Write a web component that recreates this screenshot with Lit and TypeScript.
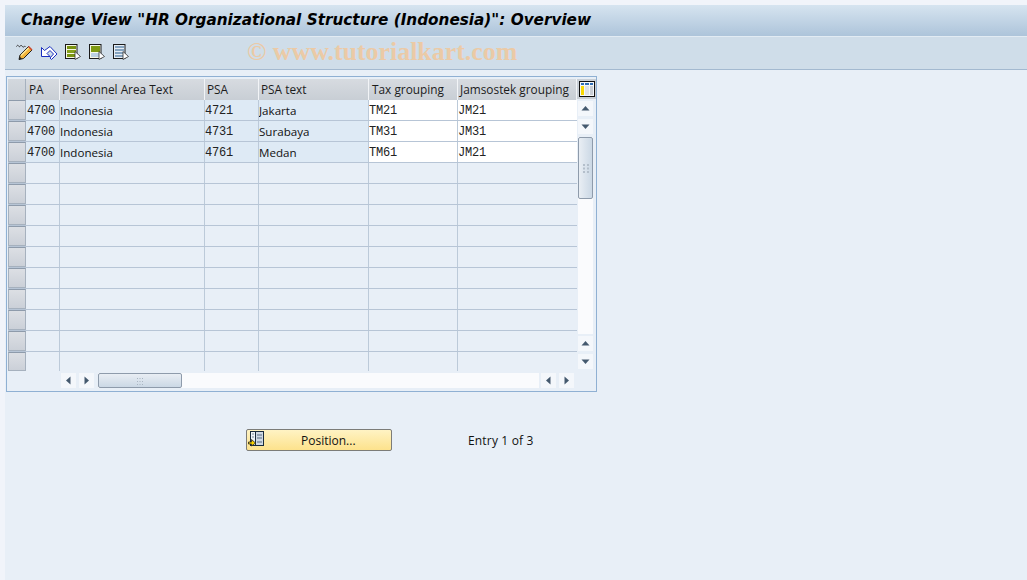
import { LitElement, html, css, svg } from "lit";
import { customElement } from "lit/decorators.js";

const rows = [
  ["4700", "Indonesia", "4721", "Jakarta", "TM21", "JM21"],
  ["4700", "Indonesia", "4731", "Surabaya", "TM31", "JM31"],
  ["4700", "Indonesia", "4761", "Medan", "TM61", "JM21"],
  ...Array.from({ length: 10 }, () => ["", "", "", "", "", ""]),
];
const heads = ["PA", "Personnel Area Text", "PSA", "PSA text", "Tax grouping", "Jamsostek grouping"];
const widths = ["w1", "w2", "w3", "w4", "w5", "w6"];
const mono = [true, false, true, false, true, true];

const pencil = svg`<svg width="18" height="18" viewBox="0 0 18 18"><path d="M0.500 3.500c1-2 2-1 2.500 0s1.500-1.500 2.500-1 1 2 2 1.500 1-1 2-.5" fill="none" stroke="#333" stroke-width="1"/><path d="M3 16.500l1-4.500 8.500-8.500 3.500 3.500-8.500 8.500z" fill="#f3b53a" stroke="#1c1c1c" stroke-width="1"/><path d="M5 12.500l8-8" stroke="#fde79a" stroke-width="1.500"/><path d="M12.500 3.500l3.500 3.500" stroke="#c9442c" stroke-width="1.500"/><path d="M3 16.500l.7-3 2.300 2.300z" fill="#222"/></svg>`;
const undo = svg`<svg width="18" height="18" viewBox="0 0 18 18"><path d="M1.500 4.500V13.500H10L7 10.500L10 7.500L13.500 11L10 15L11.500 16.500L17 11L10 3.500L4.500 7.500Z" fill="#fff" stroke="#1a2fc0" stroke-width="1"/></svg>`;
const doc = (kind: string) => svg`<svg width="16" height="16" viewBox="0 0 16 16">
  <rect x="0.500" y="0.500" width="11.500" height="14" fill="${kind === "c" ? "#e6edf4" : "#f6f8e6"}" stroke="#1a1a1a"/>
  ${kind === "a" ? svg`<rect x="2" y="2" width="9" height="3" fill="#7a9412"/><rect x="2" y="6" width="9" height="3" fill="#86a01a"/><rect x="2" y="10" width="9" height="3" fill="#7a9412"/>` : ""}
  ${kind === "b" ? svg`<rect x="2" y="2" width="9" height="6" fill="#7f9a12"/><rect x="2" y="9" width="9" height="4" fill="#bcd0e2"/>` : ""}
  ${kind === "c" ? svg`<rect x="2" y="2" width="9" height="2" fill="#86a4c0"/><rect x="2" y="5" width="9" height="2" fill="#86a4c0"/><rect x="2" y="8" width="9" height="2" fill="#86a4c0"/><rect x="2" y="11" width="9" height="2" fill="#86a4c0"/>` : ""}
  <path d="M10 7.500l5.500 5-5.500 3z" fill="#fff" stroke="#333" stroke-width="0.800"/></svg>`;
const cfg = svg`<svg width="16" height="16" viewBox="0 0 16 16"><rect x="0" y="0" width="16" height="16" fill="#111"/><rect x="1" y="1" width="14" height="14" fill="#f4f6f8"/><rect x="2" y="2" width="3" height="2" fill="#2e6db5"/><rect x="6" y="2" width="4" height="2" fill="#2e6db5"/><rect x="11" y="2" width="3" height="2" fill="#2e6db5"/><rect x="2" y="5" width="3" height="9" fill="#f8d800"/><rect x="6" y="5" width="4" height="9" fill="#dde1e6"/><rect x="11" y="5" width="3" height="9" fill="#c9ced5"/></svg>`;
const posIcon = svg`<svg width="16" height="16" viewBox="0 0 16 16"><rect x="2.500" y="0.500" width="13" height="14" fill="#cfd8e4" stroke="#1a2a3a"/><rect x="2.500" y="0.500" width="5" height="14" fill="#eef2f7" stroke="#1a2a3a"/><path d="M9 4h5M9 7h5M9 11h5" stroke="#5a6c80" stroke-width="1.200"/><path d="M4 3h2M4 6h2" stroke="#7a8a9a"/><path d="M0.500 11h3V8.500l4 3.500-4 3V13h-3z" fill="#f7d000" stroke="#222" stroke-width="0.800"/></svg>`;

const tri = (d: string) => {
  const p: Record<string, string> = { up: "M0.500 6.500L4.500 2l4 4.500z", down: "M0.500 2.500h8L4.500 7z", left: "M6.500 0.500v8L2 4.500z", right: "M2.500 0.500v8L7 4.500z" };
  return svg`<svg width="9" height="9" viewBox="0 0 9 9"><path d="${p[d]}" fill="#44596e"/></svg>`;
};
const grip = svg`<svg width="8" height="8" viewBox="0 0 8 8"><path d="M1 1h1v1H1zM3.500 1h1v1h-1zM6 1h1v1H6zM1 4h1v1H1zM3.500 4h1v1h-1zM6 4h1v1H6zM1 7h1v1H1zM3.500 7h1v1h-1zM6 7h1v1H6z" fill="#a9b5c2"/></svg>`;
const gripV = svg`<svg width="8" height="9" viewBox="0 0 8 9"><path d="M1 0h2v2H1zM5 0h2v2H5zM1 3.500h2v2H1zM5 3.500h2v2H5zM1 7h2v2H1zM5 7h2v2H5z" fill="#b4bfcb"/></svg>`;

@customElement("app-root")
export class AppRoot extends LitElement {
  static styles = css`
    :host { display: block; width: 1027px; height: 580px; background: #f1f4fa; overflow: hidden; font-family: "Open Sans", "Noto Sans", sans-serif; color: #111; }
    .page { position: relative; margin: 5px 0 0 5px; height: 575px; background: #e8eff7; }
    .title { height: 31px; box-sizing: border-box; padding: 0 0 2px 16px; background: linear-gradient(#d6e4f0, #adc4da); display: flex; align-items: center; font: italic bold 15.25px "DejaVu Sans", sans-serif; color: #000; white-space: nowrap; }
    .tools { height: 34px; box-sizing: border-box; background: #cfdde9; border-bottom: 1px solid #a3b9d0; border-top: 1px solid #e2ebf3; display: flex; align-items: center; padding: 0 0 3px 11px; gap: 6px; }
    .tools span { display: flex; width: 18px; height: 18px; align-items: center; justify-content: center; }
    .mark { position: absolute; left: 242px; top: 32px; font: bold 25.9px "Liberation Serif", serif; color: #ebcaa6; white-space: nowrap; }
    .table { margin: 6px 0 0 1px; width: 591px; height: 316px; box-sizing: border-box; border: 1px solid #8fb0d3; padding: 2px 0 0 1px; display: grid; grid-template-columns: 569px 1fr; grid-template-rows: 294px 18px; }
    .main { display: flex; flex-direction: column; }
    .row { display: flex; height: 21px; box-sizing: border-box; border-bottom: 1px solid #b7c5d6; flex: none; font-size: 11.6px; }
    .row:last-child { border-bottom: 0; height: 19px; }
    .row.head { border-bottom: 0; font-size: 11.85px; }
    .c { box-sizing: border-box; border-right: 1px solid #bccad9; display: flex; align-items: center; white-space: nowrap; overflow: hidden; }
    .sel { width: 18px; border: 1px solid #a6b1be; border-top-color: #8e9bab; border-bottom-color: #a6b1be; background: linear-gradient(#dcdfe4, #cbd0d8); padding: 0; }
    .w1 { width: 34px; padding-left: 1px; } .w2 { width: 145px; } .w3 { width: 54px; } .w4 { width: 110px; } .w5 { width: 89px; } .w6 { width: 119px; border-right: 0; }
    .head .c { background: linear-gradient(#d7dbe0, #c8ced5); border-right: 1px solid #f2f4f7; padding: 0 0 2px 2px; height: 21px; color: #1c1c1c; }
    .head .w1 { padding-left: 3px; }
    .head .w5 { padding-left: 3px; }
    .head .sel { border: 0; border-right: 1px solid #a6b1be; background: linear-gradient(#d3d8de, #c8ced5); padding: 0; }
    .ro { background: #deeaf5; }
    .wh { background: #fff; }
    .mono { font: 12px "Liberation Mono", monospace; letter-spacing: -0.2px; padding-top: 1px; color: #222; }
    .side { display: flex; flex-direction: column; align-items: flex-start; padding-left: 1px; }
    .cfg { width: 19px; height: 20px; background: #c9cfd6; display: flex; align-items: center; justify-content: center; margin: 0 0 2px -1px; }
    .btn { flex: none; width: 15px; height: 15px; background: #f4f7fb; display: flex; align-items: center; justify-content: center; }
    .vs { display: flex; flex-direction: column; align-items: flex-start; }
    .vs .btn + .btn { margin-top: 3px; }
    .vtrack { width: 15px; height: 197px; margin: 3px 0 2px; background: #fafbfd; flex: none; }
    .vthumb { box-sizing: border-box; width: 15px; height: 62px; border: 1px solid #8e9bab; border-radius: 2px; background: linear-gradient(90deg, #e9eef4, #cbd8e5); display: flex; align-items: center; justify-content: center; }
    .hs { display: flex; align-items: flex-start; padding: 0 0 0 53px; box-sizing: border-box; }
    .hs .btn + .btn { margin-left: 3px; }
    .htrack { width: 441px; height: 15px; margin: 0 2px 0 4px; background: #fafbfd; }
    .hthumb { box-sizing: border-box; width: 84px; height: 15px; border: 1px solid #8e9bab; border-radius: 2px; background: linear-gradient(#e9eef4, #cbd8e5); display: flex; align-items: center; justify-content: center; }
    .foot { display: flex; align-items: center; margin: 37px 0 0 241px; font-size: 12px; }
    .pos { box-sizing: border-box; width: 146px; height: 22px; border: 1px solid #7c7c78; border-radius: 2px; background: linear-gradient(#fff3c4, #fde28c); display: flex; align-items: center; position: relative; padding-left: 54px; color: #111; }
    .pos svg { position: absolute; left: 1px; top: 1px; }
    .pos b { font-weight: 400; white-space: nowrap; }
    .entry { margin-left: 76px; letter-spacing: 0.17px; }
  `;

  render() {
    return html`<div class="page">
      <div class="title">Change View "HR Organizational Structure (Indonesia)": Overview</div>
      <div class="tools"><span>${pencil}</span><span>${undo}</span><span>${doc("a")}</span><span>${doc("b")}</span><span>${doc("c")}</span></div>
      <div class="mark">© www.tutorialkart.com</div>
      <div class="table">
        <div class="main">
          <div class="row head"><div class="c sel"></div>${heads.map((h, i) => html`<div class="c ${widths[i]}">${h}</div>`)}</div>
          ${rows.map((r) => html`<div class="row"><div class="c sel"></div>${r.map((v, i) => html`<div class="c ${widths[i]} ${v ? (i < 4 ? "ro" : "wh") : ""} ${mono[i] ? "mono" : ""}">${v}</div>`)}</div>`)}
        </div>
        <div class="side">
          <div class="cfg">${cfg}</div>
          <div class="vs">
            <div class="btn">${tri("up")}</div><div class="btn">${tri("down")}</div>
            <div class="vtrack"><div class="vthumb">${gripV}</div></div>
            <div class="btn">${tri("up")}</div><div class="btn">${tri("down")}</div>
          </div>
        </div>
        <div class="hs">
          <div class="btn">${tri("left")}</div><div class="btn">${tri("right")}</div>
          <div class="htrack"><div class="hthumb">${grip}</div></div>
          <div class="btn">${tri("left")}</div><div class="btn">${tri("right")}</div>
        </div>
      </div>
      <div class="foot">
        <div class="pos">${posIcon}<b>Position...</b></div>
        <div class="entry">Entry 1 of 3</div>
      </div>
    </div>`;
  }
}
